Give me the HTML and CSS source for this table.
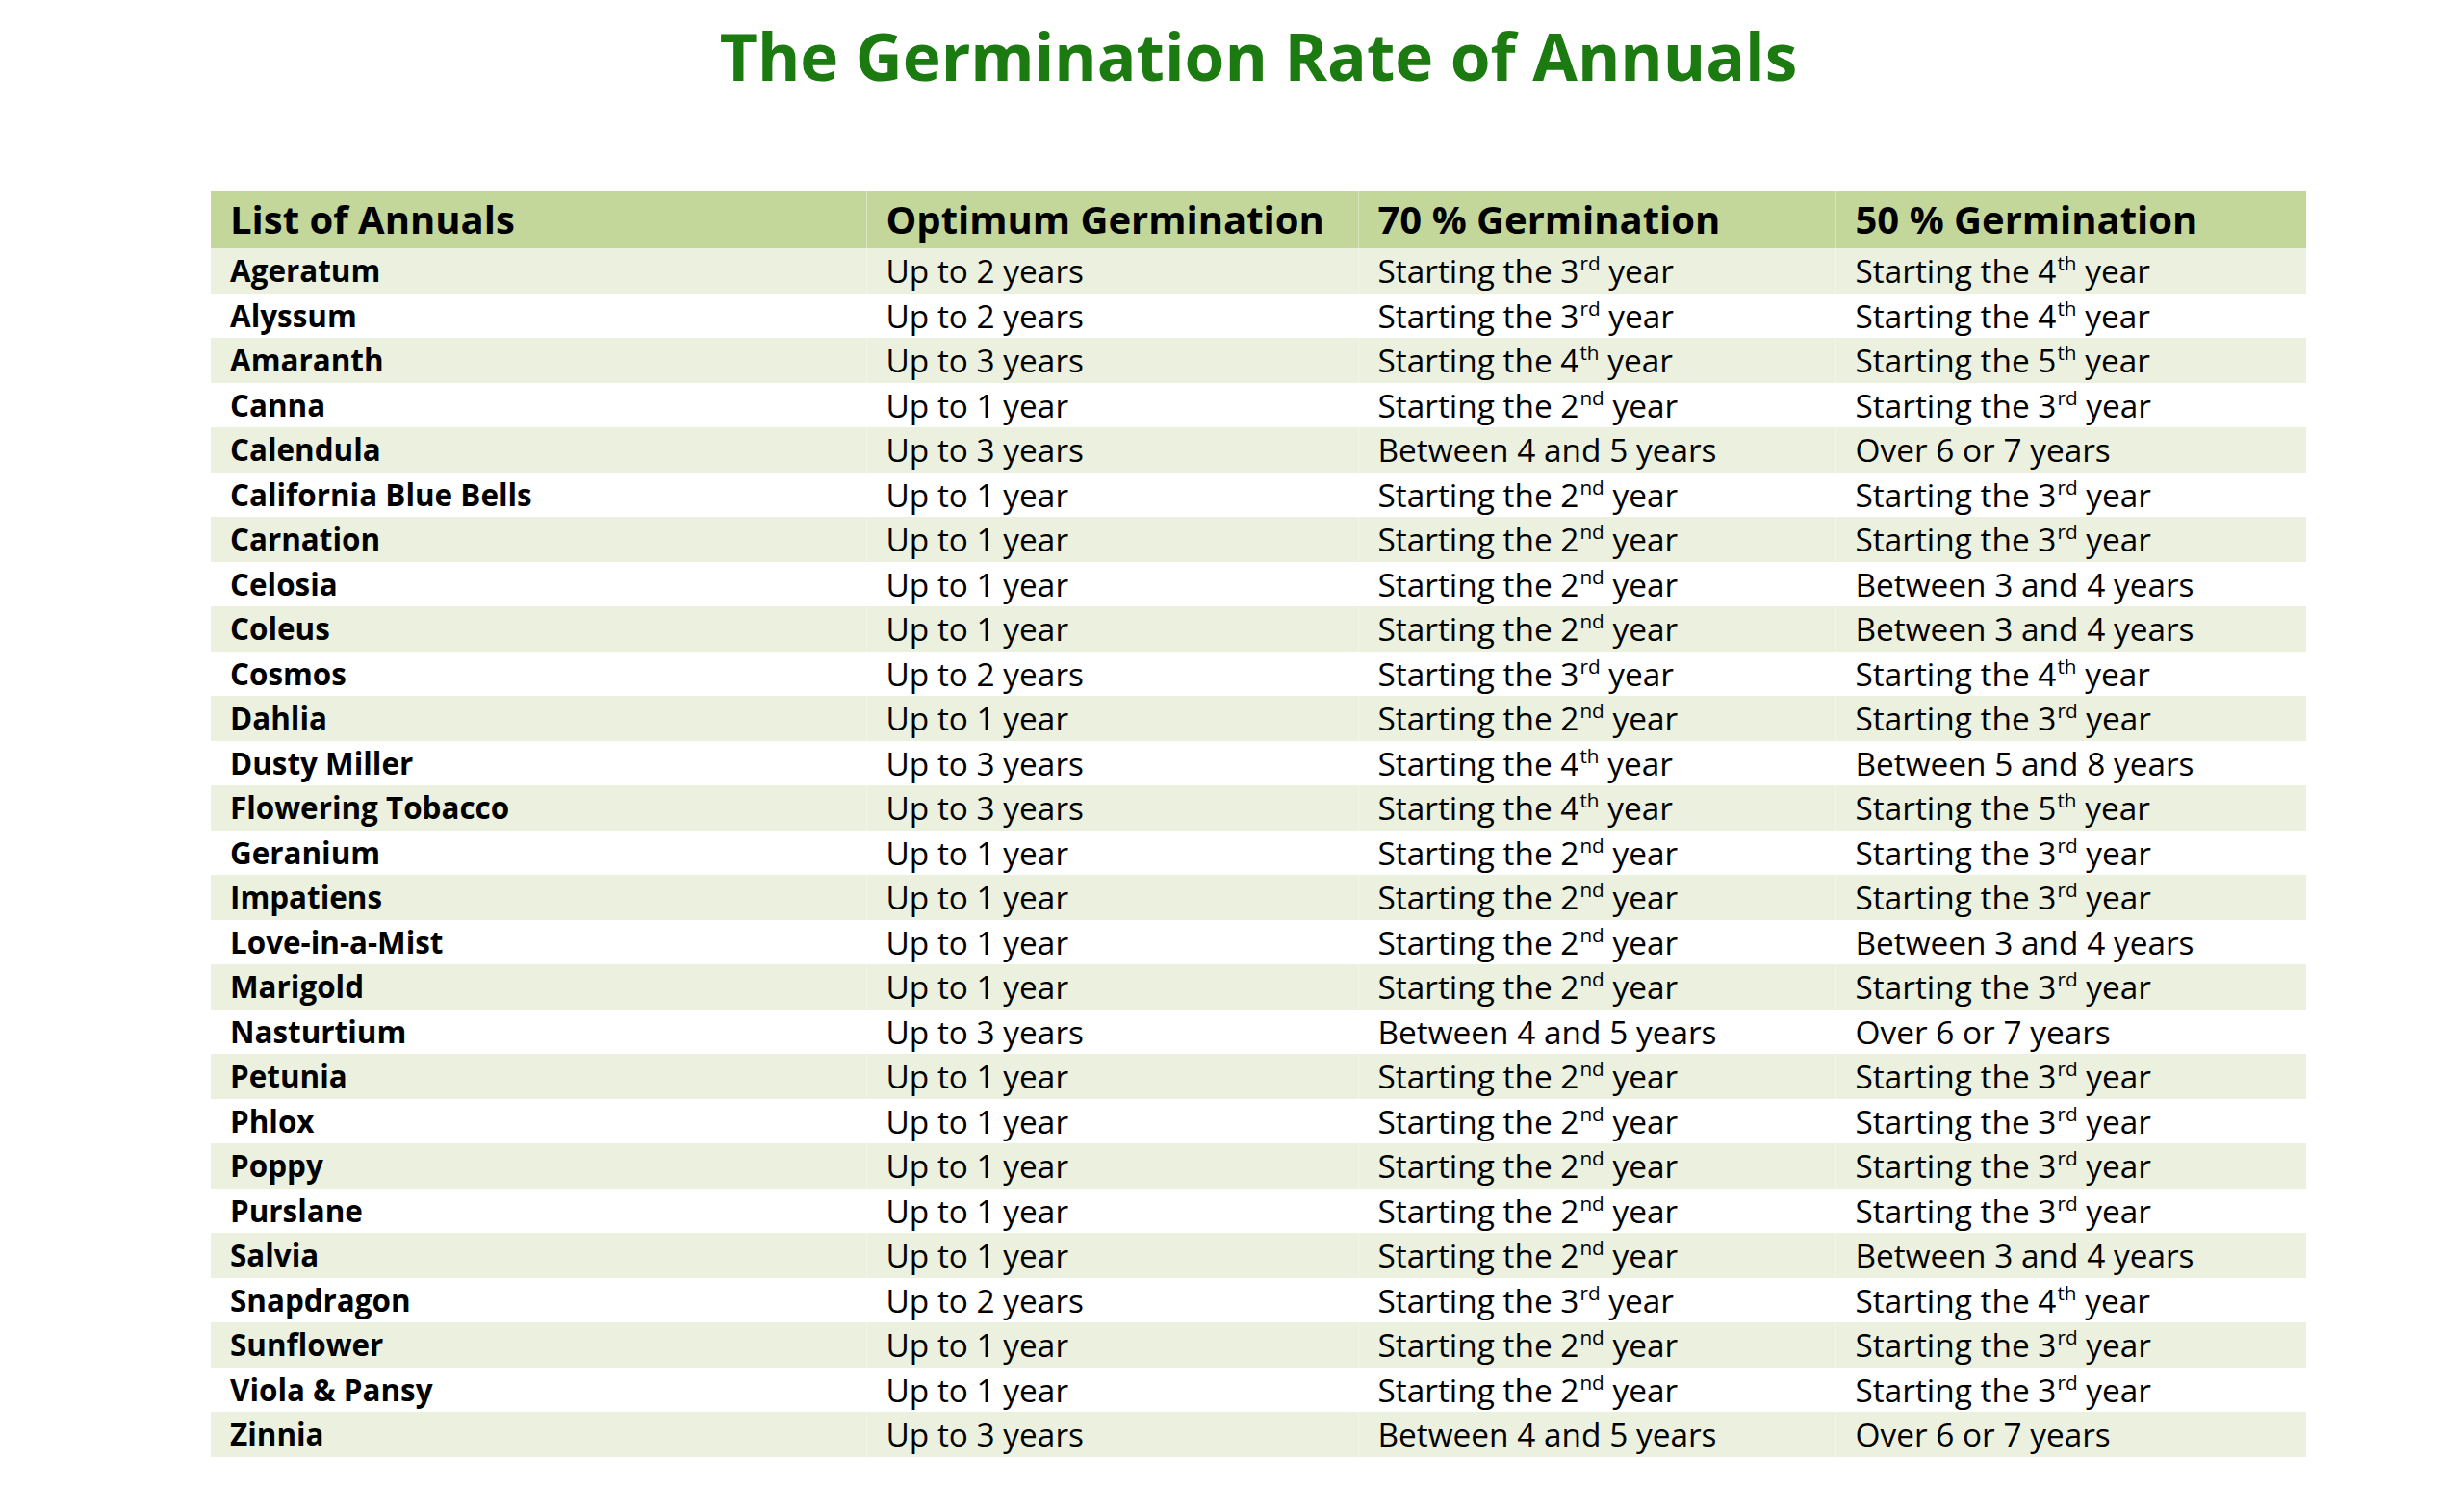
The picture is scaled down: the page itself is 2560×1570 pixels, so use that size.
FILE: index.html
```html
<!DOCTYPE html>
<html lang="en">
<head>
<meta charset="utf-8">
<title>The Germination Rate of Annuals</title>
<link rel="stylesheet" href="styles.css">
</head>
<body>
<main class="page">
  <h1 class="title">The Germination Rate of Annuals</h1>
  <table class="rates">
    <colgroup>
      <col class="c1"><col class="c2"><col class="c3"><col class="c4">
    </colgroup>
    <thead>
      <tr><th>List of Annuals</th><th>Optimum Germination</th><th>70 % Germination</th><th>50 % Germination</th></tr>
    </thead>
    <tbody>
      <tr><td class="name">Ageratum</td><td>Up to 2 years</td><td>Starting the 3<sup>rd</sup> year</td><td>Starting the 4<sup>th</sup> year</td></tr>
      <tr><td class="name">Alyssum</td><td>Up to 2 years</td><td>Starting the 3<sup>rd</sup> year</td><td>Starting the 4<sup>th</sup> year</td></tr>
      <tr><td class="name">Amaranth</td><td>Up to 3 years</td><td>Starting the 4<sup>th</sup> year</td><td>Starting the 5<sup>th</sup> year</td></tr>
      <tr><td class="name">Canna</td><td>Up to 1 year</td><td>Starting the 2<sup>nd</sup> year</td><td>Starting the 3<sup>rd</sup> year</td></tr>
      <tr><td class="name">Calendula</td><td>Up to 3 years</td><td>Between 4 and 5 years</td><td>Over 6 or 7 years</td></tr>
      <tr><td class="name">California Blue Bells</td><td>Up to 1 year</td><td>Starting the 2<sup>nd</sup> year</td><td>Starting the 3<sup>rd</sup> year</td></tr>
      <tr><td class="name">Carnation</td><td>Up to 1 year</td><td>Starting the 2<sup>nd</sup> year</td><td>Starting the 3<sup>rd</sup> year</td></tr>
      <tr><td class="name">Celosia</td><td>Up to 1 year</td><td>Starting the 2<sup>nd</sup> year</td><td>Between 3 and 4 years</td></tr>
      <tr><td class="name">Coleus</td><td>Up to 1 year</td><td>Starting the 2<sup>nd</sup> year</td><td>Between 3 and 4 years</td></tr>
      <tr><td class="name">Cosmos</td><td>Up to 2 years</td><td>Starting the 3<sup>rd</sup> year</td><td>Starting the 4<sup>th</sup> year</td></tr>
      <tr><td class="name">Dahlia</td><td>Up to 1 year</td><td>Starting the 2<sup>nd</sup> year</td><td>Starting the 3<sup>rd</sup> year</td></tr>
      <tr><td class="name">Dusty Miller</td><td>Up to 3 years</td><td>Starting the 4<sup>th</sup> year</td><td>Between 5 and 8 years</td></tr>
      <tr><td class="name">Flowering Tobacco</td><td>Up to 3 years</td><td>Starting the 4<sup>th</sup> year</td><td>Starting the 5<sup>th</sup> year</td></tr>
      <tr><td class="name">Geranium</td><td>Up to 1 year</td><td>Starting the 2<sup>nd</sup> year</td><td>Starting the 3<sup>rd</sup> year</td></tr>
      <tr><td class="name">Impatiens</td><td>Up to 1 year</td><td>Starting the 2<sup>nd</sup> year</td><td>Starting the 3<sup>rd</sup> year</td></tr>
      <tr><td class="name">Love-in-a-Mist</td><td>Up to 1 year</td><td>Starting the 2<sup>nd</sup> year</td><td>Between 3 and 4 years</td></tr>
      <tr><td class="name">Marigold</td><td>Up to 1 year</td><td>Starting the 2<sup>nd</sup> year</td><td>Starting the 3<sup>rd</sup> year</td></tr>
      <tr><td class="name">Nasturtium</td><td>Up to 3 years</td><td>Between 4 and 5 years</td><td>Over 6 or 7 years</td></tr>
      <tr><td class="name">Petunia</td><td>Up to 1 year</td><td>Starting the 2<sup>nd</sup> year</td><td>Starting the 3<sup>rd</sup> year</td></tr>
      <tr><td class="name">Phlox</td><td>Up to 1 year</td><td>Starting the 2<sup>nd</sup> year</td><td>Starting the 3<sup>rd</sup> year</td></tr>
      <tr><td class="name">Poppy</td><td>Up to 1 year</td><td>Starting the 2<sup>nd</sup> year</td><td>Starting the 3<sup>rd</sup> year</td></tr>
      <tr><td class="name">Purslane</td><td>Up to 1 year</td><td>Starting the 2<sup>nd</sup> year</td><td>Starting the 3<sup>rd</sup> year</td></tr>
      <tr><td class="name">Salvia</td><td>Up to 1 year</td><td>Starting the 2<sup>nd</sup> year</td><td>Between 3 and 4 years</td></tr>
      <tr><td class="name">Snapdragon</td><td>Up to 2 years</td><td>Starting the 3<sup>rd</sup> year</td><td>Starting the 4<sup>th</sup> year</td></tr>
      <tr><td class="name">Sunflower</td><td>Up to 1 year</td><td>Starting the 2<sup>nd</sup> year</td><td>Starting the 3<sup>rd</sup> year</td></tr>
      <tr><td class="name">Viola &amp; Pansy</td><td>Up to 1 year</td><td>Starting the 2<sup>nd</sup> year</td><td>Starting the 3<sup>rd</sup> year</td></tr>
      <tr><td class="name">Zinnia</td><td>Up to 3 years</td><td>Between 4 and 5 years</td><td>Over 6 or 7 years</td></tr>
    </tbody>
  </table>
</main>
</body>
</html>
```

FILE: styles.css
```css
html, body {
  margin: 0;
  padding: 0;
  background: #ffffff;
}

body {
  font-family: "Open Sans", "Noto Sans", sans-serif;
  color: #000000;
}

.page {
  display: flex;
  flex-direction: column;
  align-items: flex-start;
  width: 2177px;
  padding: 13px 0 0 219px;
}

.title {
  align-self: stretch;
  margin: 0;
  font-size: 67.6px;
  line-height: 91px;
  font-weight: 700;
  color: #1b7a10;
  text-align: center;
  white-space: nowrap;
}

.rates {
  margin-top: 94px;
  border-collapse: collapse;
  table-layout: fixed;
  width: 2177px;
}

.c1 { width: 681px; }
.c2 { width: 511px; }
.c3 { width: 496px; }
.c4 { width: 489px; }

.rates th,
.rates td {
  padding: 0 0 0 20px;
  text-align: left;
  white-space: nowrap;
  vertical-align: middle;
}

.rates th + th,
.rates td + td {
  border-left: 1px solid rgba(255, 255, 255, 0.35);
}

.rates thead tr {
  height: 60px;
  background: #c4d79b;
}

.rates th {
  font-size: 40px;
  font-weight: 700;
  line-height: 60px;
}

.rates tbody tr {
  height: 46.5px;
}

.rates tbody tr:nth-child(odd) {
  background: #ebf1de;
}

.rates td {
  font-size: 33.4px;
  line-height: 46px;
  font-weight: 400;
}

.rates td.name {
  font-size: 31.4px;
  font-weight: 700;
}

.rates sup {
  font-size: 0.62em;
  line-height: 0;
  vertical-align: 0.62em;
  margin-left: 1px;
}
```
